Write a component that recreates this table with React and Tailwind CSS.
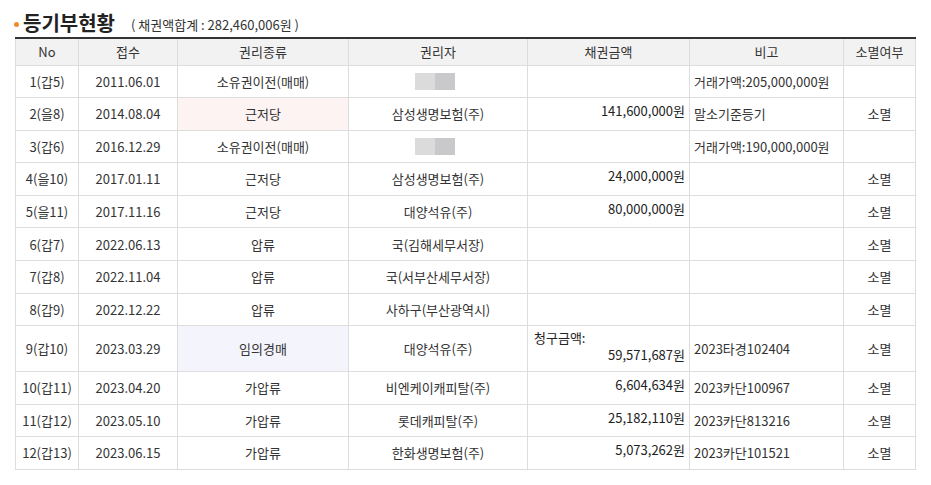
import React from "react";

const rows = [
  { no: "1(갑5)", date: "2011.06.01", kind: "소유권이전(매매)", holder: null, amount: "", note: "거래가액:205,000,000원", gone: "" },
  { no: "2(을8)", date: "2014.08.04", kind: "근저당", holder: "삼성생명보험(주)", amount: "141,600,000원", note: "말소기준등기", gone: "소멸", kindBg: "bg-[#fdf3f3]" },
  { no: "3(갑6)", date: "2016.12.29", kind: "소유권이전(매매)", holder: null, amount: "", note: "거래가액:190,000,000원", gone: "" },
  { no: "4(을10)", date: "2017.01.11", kind: "근저당", holder: "삼성생명보험(주)", amount: "24,000,000원", note: "", gone: "소멸" },
  { no: "5(을11)", date: "2017.11.16", kind: "근저당", holder: "대양석유(주)", amount: "80,000,000원", note: "", gone: "소멸" },
  { no: "6(갑7)", date: "2022.06.13", kind: "압류", holder: "국(김해세무서장)", amount: "", note: "", gone: "소멸" },
  { no: "7(갑8)", date: "2022.11.04", kind: "압류", holder: "국(서부산세무서장)", amount: "", note: "", gone: "소멸" },
  { no: "8(갑9)", date: "2022.12.22", kind: "압류", holder: "사하구(부산광역시)", amount: "", note: "", gone: "소멸" },
  { no: "9(갑10)", date: "2023.03.29", kind: "임의경매", holder: "대양석유(주)", amount: "59,571,687원", claim: true, note: "2023타경102404", gone: "소멸", kindBg: "bg-[#f4f4fd]" },
  { no: "10(갑11)", date: "2023.04.20", kind: "가압류", holder: "비엔케이캐피탈(주)", amount: "6,604,634원", note: "2023카단100967", gone: "소멸" },
  { no: "11(갑12)", date: "2023.05.10", kind: "가압류", holder: "롯데캐피탈(주)", amount: "25,182,110원", note: "2023카단813216", gone: "소멸" },
  { no: "12(갑13)", date: "2023.06.15", kind: "가압류", holder: "한화생명보험(주)", amount: "5,073,262원", note: "2023카단101521", gone: "소멸" },
];

const Masked = () => (
  <div className="mx-auto flex h-[17px] w-[40px] -translate-x-[3px]">
    <div className="w-1/2 bg-[#dcdbdb]" />
    <div className="w-1/2 bg-[#c9c9cb]" />
  </div>
);

export default function App() {
  return (
    <div
      className="min-h-screen bg-white text-[13px] text-[#333]"
      style={{ fontFamily: '"Malgun Gothic", "Noto Sans CJK KR", "Noto Sans", sans-serif' }}
    >
      <div className="flex items-center pl-[14px] pt-[9px] h-[37px]">
        <span className="mr-[4px] mt-[2px] h-[5px] w-[5px] rounded-full bg-[#f08a2c]" />
        <h2 className="text-[20px] font-bold leading-none text-[#222]">등기부현황</h2>
        <span className="ml-[16px] mt-[3px] text-[13px] text-[#333]">( 채권액합계 : 282,460,006원 )</span>
      </div>

      <table className="ml-[15px] w-[900px] table-fixed border-collapse border-t-2 border-t-[#333]">
        <colgroup>
          <col className="w-[63px]" />
          <col className="w-[99px]" />
          <col className="w-[171px]" />
          <col className="w-[179px]" />
          <col className="w-[162px]" />
          <col className="w-[154px]" />
          <col className="w-[72px]" />
        </colgroup>
        <thead>
          <tr className="h-[27px] bg-[#f2f2f2]">
            {["No", "접수", "권리종류", "권리자", "채권금액", "비고", "소멸여부"].map((h) => (
              <th key={h} className="border border-[#dddddd] border-t-0 text-center font-normal text-[#333]">
                {h}
              </th>
            ))}
          </tr>
        </thead>
        <tbody>
          {rows.map((r) => (
            <tr key={r.no} className={r.claim ? "h-[46px]" : "h-[32.6px]"}>
              <td className="border border-[#dddddd] text-center">{r.no}</td>
              <td className="border border-[#dddddd] text-center">{r.date}</td>
              <td className={`border border-[#dddddd] text-center ${r.kindBg || ""}`}>{r.kind}</td>
              <td className="border border-[#dddddd] text-center">{r.holder ? r.holder : <Masked />}</td>
              <td className="border border-[#dddddd] px-[4px] text-right align-middle text-[#222]">
                {r.claim ? (
                  <div className="flex flex-col pb-[4px]">
                    <span className="text-left pl-[2px] leading-[16px]">청구금액:</span>
                    <span className="leading-[18px]">{r.amount}</span>
                  </div>
                ) : (
                  <span className="relative -top-[3px]">{r.amount}</span>
                )}
              </td>
              <td className="border border-[#dddddd] pl-[4px] text-left">{r.note}</td>
              <td className="border border-[#dddddd] text-center">{r.gone}</td>
            </tr>
          ))}
        </tbody>
      </table>
    </div>
  );
}
